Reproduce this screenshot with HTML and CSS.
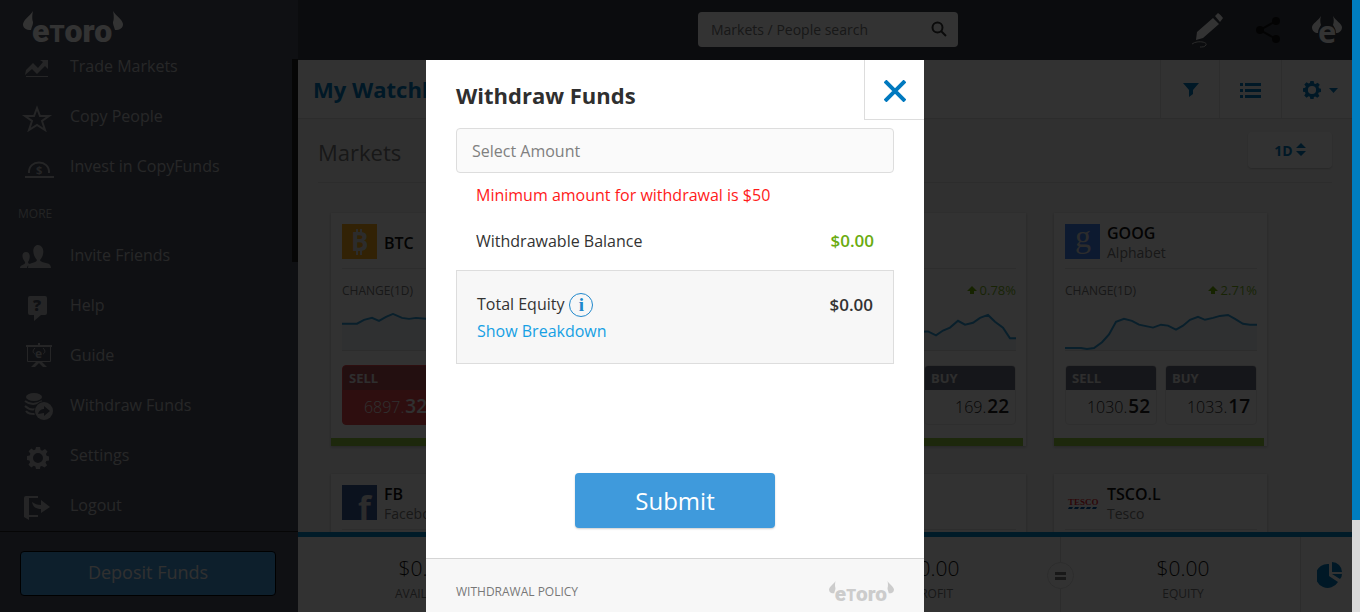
FILE: index.html
```html
<!DOCTYPE html>
<html lang="en">
<head>
  <meta charset="UTF-8">
  <title>eToro - Withdraw Funds</title>
  <link rel="stylesheet" href="styles.css">
</head>
<body>

  <!-- shared shapes -->
  <svg class="defs" width="0" height="0" aria-hidden="true">
    <symbol id="logo" viewBox="0 0 100 36">
      <path d="M10 1C7 6 1 9 0 14c0 4 3 6 8 6 1-4 2-5 2-8-1-2-1-7 0-11z"/>
      <path d="M90 1c3 5 9 8 10 13 0 4-3 6-8 6-1-4-2-5-2-8 1-2 1-7 0-11z"/>
      <text x="9" y="32" font-family="Roboto, sans-serif" font-weight="900" font-size="32">e<tspan font-size="24">T</tspan>oro</text>
    </symbol>
    <symbol id="gear" viewBox="0 0 22 22">
      <path fill-rule="evenodd" d="M9 0h4l.6 3 1.6.7L18 2l2.500 2.500-1.600 2.600.7 1.700 2.400.7v4l-2.800.6-.7 1.600 1.600 2.600L17.500 20.500l-2.600-1.600-1.600.7L13 22H9l-.6-2.600-1.600-.7-2.500 1.800L1.500 17.700l1.600-2.500-.7-1.700L0 13V9l2.700-.6.7-1.600-1.800-2.500L4.300 1.500l2.500 1.700L8.400 2.500zM11 6a5 5 0 1 0 0 10 5 5 0 0 0 0-10z"/>
    </symbol>
  </svg>

  <div class="app">
    <aside class="sidebar">
      <a class="logo" href="#" aria-label="eToro"><svg width="102" height="36"><use href="#logo"/></svg></a>

      <nav class="menu">
        <a href="#">
          <svg width="40" height="28" viewBox="0 0 40 28"><path d="M8 22h22v1H8z"/><path d="M8 16l7-7 5 5 5-6-3-2h8v9l-3-3-8 8-5-5-7 6z"/></svg>
          Trade Markets
        </a>
        <a href="#">
          <svg width="40" height="28" viewBox="0 0 40 28"><path class="line" d="M19 4l3 8h9l-7 5 3 9-8-5-8 5 3-9-7-5h9z"/></svg>
          Copy People
        </a>
        <a href="#">
          <svg width="40" height="28" viewBox="0 0 40 28"><path class="line" d="M11 19c-1-14 21-14 20 0M7 23h29"/><text x="18" y="20" font-size="11" font-weight="700">$</text></svg>
          Invest in CopyFunds
        </a>

        <h6>MORE</h6>

        <a href="#">
          <svg width="40" height="28" viewBox="0 0 40 28"><path d="M2 25c0-4 6-3 5-6-4-5-3-10 1-10s5 5 2 10c0 2 2 2 3 2-3 1-4 2-4 4zM10 25c0-7 8-4 9-8-6-7-4-15 1-15s8 8 2 15c1 4 11 1 11 8z"/></svg>
          Invite Friends
        </a>
        <a href="#">
          <svg width="40" height="28" viewBox="0 0 40 28"><path d="M12 3h15q2 0 2 2v15q0 2-2 2h-4l-7 6v-6h-4q-2 0-2-2V5q0-2 2-2z"/><text class="cut" x="15" y="18" font-size="16" font-weight="800">?</text></svg>
          Help
        </a>
        <a href="#">
          <svg width="40" height="28" viewBox="0 0 40 28"><path d="M8 2h12V0h2v2h12v2H8zM18 19l-5 5h4l4-4 4 4h4l-5-5z"/><path class="thin" d="M9.500 3v15.500h23V3M17 5c-3 3-2 5 0 6M25 5c3 3 2 5 0 6"/><text x="17" y="15" font-size="12" font-weight="700">e</text></svg>
          Guide
        </a>
        <a href="#">
          <svg width="40" height="28" viewBox="0 0 40 28"><ellipse cx="16" cy="4" rx="8" ry="4"/><path class="line" d="M7 8c5 4 11 4 17 0M7 13c3 3 7 4 11 3M8 18c2 3 5 3 9 3"/><circle cx="26" cy="18" r="10" class="cut"/><circle cx="26" cy="18" r="9"/><path class="cut" d="M20 21c1-4 4-5 6-5v-3l6 5-6 5v-3z"/></svg>
          Withdraw Funds
        </a>
        <a href="#">
          <svg width="40" height="28" viewBox="0 0 40 28"><use href="#gear" x="9" y="4" width="22" height="22"/></svg>
          Settings
        </a>
        <a href="#">
          <svg width="40" height="28" viewBox="0 0 40 28"><path d="M6 5q0-2 2-2h12v2h-9v17h9v2H11v3l-5-3z"/><path d="M14 9c3 2 5 3 9 3V7l9 7-9 6v-4c-5 0-8-2-9-7z"/></svg>
          Logout
        </a>
      </nav>

      <div class="side-scroll"></div>

      <div class="deposit">
        <button type="button">Deposit Funds</button>
      </div>
    </aside>

    <div class="main">
      <header class="topbar">
        <form class="search">
          <input type="text" aria-label="Search" placeholder="Markets / People search">
          <button type="submit" aria-label="Go"><svg width="16" height="16" viewBox="0 0 16 16"><circle cx="6.500" cy="6.500" r="5"/><path d="M10 10l5 5"/></svg></button>
        </form>
        <a href="#" aria-label="Post"><svg width="33" height="36" viewBox="0 0 33 36" fill="#fff"><path d="M6 20L22 6l6 6-16 14-7 2zM24 4l3-3q3 2 5 5l-3 4z"/><path d="M1 32c5-4 16-2 14 1-1 2-4 2-6 2" fill="none" stroke="#ccc"/></svg></a>
        <a href="#" aria-label="Share"><svg width="24" height="26" viewBox="0 0 24 26" fill="#111"><circle cx="4" cy="13" r="4"/><circle cx="20" cy="4" r="4"/><circle cx="20" cy="22" r="4"/><path d="M20 4L4 13l16 9" fill="none" stroke="#111" stroke-width="2"/></svg></a>
        <a href="#" aria-label="Profile"><svg width="30" height="30" viewBox="0 0 30 30" fill="#fff"><path d="M9 1C6 6 1 8 0 12c0 4 3 6 6 6 0-4 2-6 3-8-1-3-1-6 0-9zM21 1c3 5 8 7 9 11 0 4-3 6-6 6 0-4-2-6-3-8 1-3 1-6 0-9z"/><text x="6" y="28" font-size="31" font-weight="700">e</text></svg></a>
      </header>

      <div class="toolbar">
        <h1>My Watchlist</h1>
        <button type="button" class="tool" aria-label="Filter"><svg width="16" height="16" viewBox="0 0 16 16"><path d="M0 1h16L10 8v4l-4 3V8z"/></svg></button>
        <button type="button" class="tool wide" aria-label="List view"><svg width="21" height="16" viewBox="0 0 21 16"><path d="M0 1h3v3H0zM5 1h16v3H5zM0 7h3v3H0zM5 7h16v3H5zM0 13h3v3H0zM5 13h16v3H5z"/></svg></button>
        <button type="button" class="tool widest" aria-label="Options"><svg width="18" height="18"><use href="#gear"/></svg><svg width="9" height="5" viewBox="0 0 9 5"><path d="M0 0h9L4.500 5z"/></svg></button>
      </div>

      <div class="content">
        <div class="section-head">
          <h2>Markets</h2>
          <button type="button">1D <svg width="10" height="14" viewBox="0 0 10 14"><path d="M0 5l5-5 5 5zM0 8h10l-5 5z"/></svg></button>
        </div>

        <div class="cards">
          <div class="card traded">
            <div class="card-head">
              <svg class="pic btc" viewBox="0 0 35 35"><text x="9" y="27" font-size="26" font-weight="700">B</text><path d="M14 5h2v5h-2zM18 5h2v5h-2zM14 26h2v5h-2zM18 26h2v5h-2z"/></svg>
              <div><b>BTC</b></div>
            </div>
            <div class="change"><span>CHANGE(1D)</span></div>
            <svg class="chart" viewBox="0 0 192 38" preserveAspectRatio="none"><polygon points="0,38 0,11 15,11 22,7 30,5 37,8 44,4 51,1 60,5 67,6 74,5 84,6 192,10 192,38"/><polyline points="0,11 15,11 22,7 30,5 37,8 44,4 51,1 60,5 67,6 74,5 84,6 192,10"/></svg>
            <div class="rates">
              <button type="button" class="rate down"><b>SELL</b><span>6897.<strong>32</strong></span></button>
            </div>
          </div>

          <div class="card traded"></div>

          <div class="card traded">
            <div class="card-head"></div>
            <div class="change"><span></span><span class="up"><svg width="10" height="8" viewBox="0 0 10 8"><path d="M5 0l5 5H7v3H3V5H0z"/></svg> 0.78%</span></div>
            <svg class="chart" viewBox="0 0 192 38" preserveAspectRatio="none"><polygon points="0,38 0,24 60,20 104,19 112,23 119,18 126,15 134,8 141,12 149,10 156,5 164,2 171,9 179,15 186,26 192,26 192,38"/><polyline points="0,24 60,20 104,19 112,23 119,18 126,15 134,8 141,12 149,10 156,5 164,2 171,9 179,15 186,26 192,26"/></svg>
            <div class="rates">
              <span></span>
              <button type="button" class="rate"><b>BUY</b><span>169.<strong>22</strong></span></button>
            </div>
          </div>

          <div class="card traded">
            <div class="card-head">
              <svg class="pic goog" viewBox="0 0 35 35"><text x="10" y="23" font-size="32">g</text></svg>
              <div><b>GOOG</b><small>Alphabet</small></div>
            </div>
            <div class="change"><span>CHANGE(1D)</span><span class="up"><svg width="10" height="8" viewBox="0 0 10 8"><path d="M5 0l5 5H7v3H3V5H0z"/></svg> 2.71%</span></div>
            <svg class="chart" viewBox="0 0 192 38" preserveAspectRatio="none"><polygon points="0,38 0,36 16,36 22,37 29,36 37,30 44,22 51,9 59,6 67,8 74,12 88,15 96,12 103,13 111,17 118,13 125,7 133,4 140,7 148,5 155,3 163,2 170,6 178,11 185,12 192,12 192,38"/><polyline points="0,36 16,36 22,37 29,36 37,30 44,22 51,9 59,6 67,8 74,12 88,15 96,12 103,13 111,17 118,13 125,7 133,4 140,7 148,5 155,3 163,2 170,6 178,11 185,12 192,12"/></svg>
            <div class="rates">
              <button type="button" class="rate"><b>SELL</b><span>1030.<strong>52</strong></span></button>
              <button type="button" class="rate"><b>BUY</b><span>1033.<strong>17</strong></span></button>
            </div>
          </div>

          <div class="card">
            <div class="card-head">
              <svg class="pic fb" viewBox="0 0 35 35"><text x="16" y="35" font-size="33" font-weight="700">f</text></svg>
              <div><b>FB</b><small>Facebook</small></div>
            </div>
          </div>
          <div class="card"></div>
          <div class="card"><div class="card-head"></div></div>
          <div class="card">
            <div class="card-head">
              <svg class="pic tesco" viewBox="0 0 35 35"><text x="3" y="20" font-size="9" font-weight="700">TESCO</text><path d="M4 22h4l-1 2H3zM10 22h4l-1 2H9zM16 22h4l-1 2h-4zM22 22h4l-1 2h-4zM28 22h4l-1 2h-4z"/></svg>
              <div><b>TSCO.L</b><small>Tesco</small></div>
            </div>
          </div>
        </div>
      </div>

      <footer class="totals">
        <div class="total"><span>$0.00</span><small>AVAILABLE</small></div>
        <div class="total"><span>$0.00</span><small>ALLOCATED</small></div>
        <div class="total"><span>$0.00</span><small>PROFIT</small></div>
        <div class="total equity"><i></i><span>$0.00</span><small>EQUITY</small></div>
        <button type="button" aria-label="Portfolio chart"><svg width="26" height="26" viewBox="0 0 26 26"><path d="M12 2v12l9 6A12 12 0 1 1 12 2z"/><path d="M15 0a10 10 0 0 1 10 10H15zM15 12h10q0 3-2 5z"/></svg></button>
      </footer>
    </div>

    <div class="page-scroll"></div>
  </div>

  <div class="overlay">
    <form class="modal" role="dialog" aria-labelledby="modalTitle">
      <div class="modal-head">
        <h3 id="modalTitle">Withdraw Funds</h3>
        <button type="button" class="close" aria-label="Close"><svg width="22" height="22" viewBox="0 0 22 22"><path d="M1 1l20 20M21 1L1 21"/></svg></button>
      </div>

      <div class="modal-body">
        <input type="text" id="amount" aria-label="Select Amount" placeholder="Select Amount">
        <p class="error">Minimum amount for withdrawal is $50</p>
        <div class="balance"><span>Withdrawable Balance</span><b>$0.00</b></div>
        <div class="total-equity">
          <div>
            <div class="label">Total Equity <button type="button" class="info" aria-label="Info">i</button></div>
            <a href="#">Show Breakdown</a>
          </div>
          <b>$0.00</b>
        </div>
      </div>

      <button type="submit" class="submit">Submit</button>

      <div class="modal-foot">
        <a href="#">WITHDRAWAL POLICY</a>
        <svg width="65" height="24"><use href="#logo"/></svg>
      </div>
    </form>
  </div>

</body>
</html>
```
FILE: styles.css
```css
* {
  box-sizing: border-box;
}

body {
  margin: 0;
  font-family: "Open Sans", "Noto Sans", sans-serif;
  font-size: 16px;
  color: #333;
  overflow: hidden;
}

h1, h2, h3, h6, p {
  margin: 0;
}

a {
  color: inherit;
  text-decoration: none;
}

button, input {
  font-family: inherit;
  border: none;
  padding: 0;
}

button {
  background: none;
  cursor: pointer;
}

svg {
  display: block;
  flex: none;
}

.defs {
  position: absolute;
}

.app {
  display: flex;
  height: 100vh;
}

/* sidebar */
.sidebar {
  position: relative;
  display: flex;
  flex-direction: column;
  width: 298px;
  flex: none;
  background: #4b505f;
}

.logo {
  height: 41px;
  padding: 10px 22px 0;
  flex: none;
}

.logo svg {
  fill: #fff;
}

.menu {
  flex: 1;
  min-height: 0;
  overflow: hidden;
}

.menu a {
  display: flex;
  align-items: center;
  gap: 12px;
  height: 50px;
  padding-left: 18px;
  font-size: 16px;
  color: #c0c2c5;
}

.menu svg {
  fill: #b8babd;
  margin-top: 4px;
}

.menu .line, .menu .thin {
  fill: none;
  stroke: #b8babd;
  stroke-width: 2;
}

.menu .thin {
  stroke-width: 1;
}

.menu .cut {
  fill: #4b505f;
}

.menu h6 {
  height: 39px;
  padding: 15px 18px 0;
  font-size: 12px;
  line-height: 16px;
  font-weight: 400;
  color: #b0b2b5;
}

.side-scroll {
  position: absolute;
  top: 59px;
  right: 0;
  width: 6px;
  height: 203px;
  background: #222;
}

.deposit {
  flex: none;
  height: 81px;
  padding: 19px 22px 16px 20px;
  border-top: 1px solid #222;
}

.deposit button {
  width: 100%;
  height: 45px;
  padding-bottom: 4px;
  border: 1px solid #000;
  border-radius: 4px;
  background: #4299da;
  color: #f0f0f0;
  font-size: 18px;
}

/* top */
.main {
  flex: 1;
  min-width: 0;
  display: flex;
  flex-direction: column;
  background: #f0f0f0;
}

.topbar {
  flex: none;
  display: flex;
  align-items: center;
  justify-content: flex-end;
  gap: 32px;
  height: 60px;
  padding-right: 10px;
  background: #393e46;
}

.search {
  display: flex;
  width: 260px;
  height: 35px;
  margin: 0 201px 2px 0;
  padding: 0 11px 0 13px;
  border-radius: 4px;
  background: #fff;
}

.search input {
  flex: 1;
  min-width: 0;
  background: none;
  font-size: 14px;
}

.search input::placeholder {
  color: #777;
}

.search svg {
  fill: none;
  stroke: #333;
  stroke-width: 2;
}

.toolbar {
  flex: none;
  display: flex;
  align-items: center;
  height: 59px;
  padding-left: 15px;
  background: #fbfbfb;
  border-bottom: 1px solid #ddd;
}

.toolbar h1 {
  flex: 1;
  font-size: 22px;
  color: #0079bc;
}

.tool {
  display: flex;
  align-items: center;
  justify-content: center;
  gap: 8px;
  width: 59px;
  height: 100%;
  padding: 2px 0 0 2px;
  border-left: 1px solid #e2e2e2;
}

.tool svg, .section-head svg, .totals svg {
  fill: #0079bc;
}

.wide {
  width: 62px;
  padding-left: 0;
}

.widest {
  width: 71px;
  padding-left: 6px;
}

/* markets */
.content {
  flex: 1;
  min-height: 0;
  overflow: hidden;
  padding: 13px 20px 0;
}

.section-head {
  display: flex;
  justify-content: space-between;
  height: 51px;
  border-bottom: 1px solid #ddd;
}

.section-head h2 {
  font-size: 22px;
  line-height: 40px;
  font-weight: 400;
  color: #777;
}

.section-head button {
  display: flex;
  align-items: center;
  justify-content: center;
  gap: 3px;
  width: 84px;
  height: 36px;
  border-radius: 4px;
  background: #fbfbfb;
  box-shadow: 0 1px 2px rgba(0,0,0,0.2);
  font-size: 14px;
  font-weight: 700;
  color: #0079bc;
}

.cards {
  display: grid;
  grid-template-columns: repeat(auto-fill, 213px);
  gap: 28px;
  padding: 30px 13px 0;
}

.card {
  height: 233px;
  padding: 11px 10px 11px 11px;
  background: #fafafa;
  box-shadow: 0 1px 3px rgba(0,0,0,0.25);
}

/* green bar stops just short of the right edge */
.traded {
  background: linear-gradient(#93c83d, #93c83d) 0 100% / 210px 8px no-repeat #fafafa;
}

.card-head {
  display: flex;
  align-items: center;
  gap: 7px;
  height: 45px;
  padding-bottom: 9px;
  border-bottom: 1px solid #e2e2e2;
  line-height: 20px;
}

.card-head b {
  display: block;
  font-size: 16px;
  font-weight: 600;
  color: #111;
}

.card-head small {
  display: block;
  font-size: 14px;
  color: #777;
}

.card-head div {
  padding-top: 2px;
}

.pic {
  width: 35px;
  height: 35px;
  fill: #ddd;
}

.btc {
  background: #f7a81b;
}

.goog {
  background: #4280f0;
  font-family: "Liberation Serif", serif;
}

.fb {
  background: #3b5998;
}

.tesco {
  fill: #e1252d;
  font-family: "Liberation Serif", serif;
}

.tesco path {
  fill: #00539f;
}

.change {
  display: flex;
  justify-content: space-between;
  align-items: center;
  height: 44px;
  padding-bottom: 2px;
  font-size: 12px;
  color: #777;
}

.up {
  display: flex;
  align-items: center;
  gap: 3px;
  font-size: 13px;
  color: #7ab51d;
}

.up svg {
  fill: #6fb000;
}

.chart {
  width: 100%;
  height: 38px;
  border-bottom: 1px solid #ddd;
}

.chart polygon {
  fill: #e8edf2;
}

.chart polyline {
  fill: none;
  stroke: #2d9bd6;
  stroke-width: 2;
}

.rates {
  display: grid;
  grid-template-columns: 1fr 1fr;
  gap: 8px;
  margin-top: 14px;
}

.rate {
  height: 60px;
  border-radius: 4px;
  border: 1px solid #e5e5e5;
  overflow: hidden;
  text-align: right;
  color: #222;
}

.rate b {
  display: block;
  height: 24px;
  padding-left: 6px;
  background: #6b6f80;
  color: #e5e5e5;
  font-size: 13px;
  line-height: 24px;
  text-align: left;
}

.rate span {
  display: block;
  height: 34px;
  padding-right: 6px;
  font-size: 16px;
  font-weight: 300;
  line-height: 32px;
}

.rate strong {
  margin-left: 1px;
  font-size: 19px;
  font-weight: 600;
}

.down {
  border-color: #e5464a;
  background: #e5464a;
  color: #eee;
}

.down b {
  background: #b04a52;
}

/* totals */
.totals {
  flex: none;
  display: grid;
  grid-template-columns: 254fr 254fr 254fr 241fr 51px;
  align-items: center;
  height: 80px;
  border-top: 5px solid #0085c8;
  background: #fafafa;
}

.total {
  position: relative;
  padding-top: 8px;
  text-align: center;
}

.total span {
  display: block;
  font-size: 21px;
  font-weight: 300;
  line-height: 26px;
  color: #111;
}

.total small {
  display: block;
  margin-top: 4px;
  font-size: 12px;
  line-height: 18px;
  color: #777;
}

.equity {
  padding: 18px 0 10px 5px;
  border-left: 1px solid #ddd;
  border-right: 1px solid #ddd;
}

.equity i {
  position: absolute;
  left: -14px;
  top: 25px;
  display: flex;
  align-items: center;
  justify-content: center;
  width: 27px;
  height: 27px;
  border: 1px solid #ddd;
  border-radius: 50%;
  background: #fafafa;
}

.equity i::before {
  content: "";
  width: 11px;
  height: 2px;
  border: solid #777;
  border-width: 3px 0;
}

.totals button {
  padding-left: 16px;
}

.page-scroll {
  flex: none;
  width: 8px;
  background: linear-gradient(#007dbf 85%, #d9d9d9 85%);
}

/* withdraw modal */
.overlay {
  position: fixed;
  inset: 0 8px 0 0;
  display: flex;
  justify-content: center;
  padding: 60px 2px 0 0;
  background: rgba(0,0,0,0.8);
}

.modal {
  display: flex;
  flex-direction: column;
  width: 498px;
  background: #fff;
}

.modal-head {
  display: flex;
  justify-content: space-between;
  height: 68px;
  padding-left: 30px;
}

.modal-head h3 {
  font-size: 22px;
  line-height: 70px;
  color: #2f2f2f;
}

.close {
  display: flex;
  align-items: center;
  justify-content: center;
  width: 60px;
  height: 60px;
  padding-top: 2px;
  border-left: 1px solid #ddd;
  border-bottom: 1px solid #ddd;
}

.close svg {
  stroke: #0079bf;
  stroke-width: 4;
}

.modal-body {
  padding: 0 30px;
}

.modal-body input {
  display: block;
  width: 100%;
  height: 45px;
  padding: 0 15px;
  border: 1px solid #ddd;
  border-radius: 4px;
  background: #fafafa;
  font-size: 16px;
}

.modal-body input::placeholder {
  color: #808080;
}

.error {
  padding: 0 20px;
  font-size: 16px;
  line-height: 44px;
  color: #ff1a1a;
}

.balance {
  display: flex;
  justify-content: space-between;
  padding: 0 20px;
  line-height: 48px;
}

.modal-body b {
  font-size: 17px;
  font-weight: 600;
}

.balance b {
  color: #6aab10;
}

.total-equity {
  display: flex;
  justify-content: space-between;
  height: 94px;
  margin-top: 5px;
  padding: 20px;
  border: 1px solid #ddd;
  background: #f7f7f7;
  line-height: 27px;
}

.label {
  display: flex;
  gap: 5px;
}

.total-equity a {
  color: #16a0e4;
}

.info {
  width: 24px;
  height: 24px;
  margin-top: 2px;
  border: 1px solid #2088cc;
  border-radius: 50%;
  font-family: "Liberation Serif", serif;
  font-size: 19px;
  font-weight: 700;
  line-height: 20px;
  color: #2088cc;
}

.submit {
  width: 200px;
  height: 55px;
  margin: auto auto 30px;
  border-radius: 4px;
  background: #3f9adc;
  box-shadow: 0 1px 2px rgba(0,0,0,0.2);
  color: #fff;
  font-size: 24px;
}

.modal-foot {
  display: flex;
  align-items: center;
  justify-content: space-between;
  height: 54px;
  padding: 12px 30px 0;
  border-top: 1px solid #d5d5d5;
  background: #f7f7f7;
  font-size: 12px;
  color: #777;
}

.modal-foot svg {
  fill: #ccc;
}
```
